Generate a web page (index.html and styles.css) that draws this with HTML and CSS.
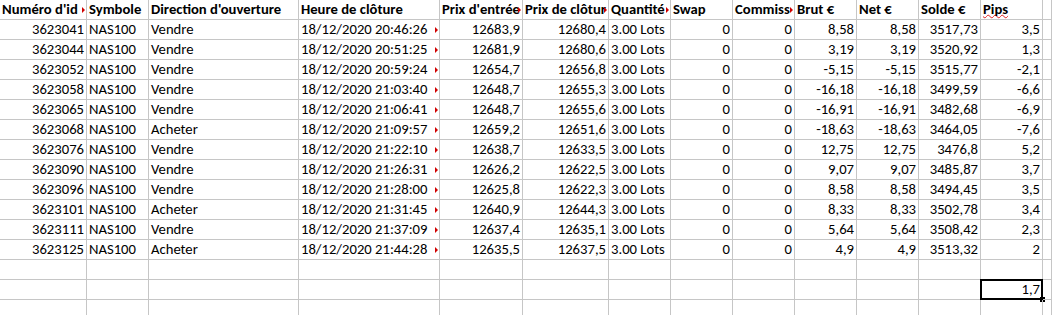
FILE: index.html
```html
<!DOCTYPE html>
<html lang="fr">
<head>
<meta charset="utf-8">
<title>Trades</title>
<link rel="stylesheet" href="styles.css">
</head>
<body>
<div class="sheet">
  <div class="c h clip">Numéro d'id</div>
  <div class="c h">Symbole</div>
  <div class="c h">Direction d'ouverture</div>
  <div class="c h">Heure de clôture</div>
  <div class="c h clip">Prix d'entrée</div>
  <div class="c h clip">Prix de clôtur</div>
  <div class="c h clip">Quantité</div>
  <div class="c h">Swap</div>
  <div class="c h clip">Commiss</div>
  <div class="c h">Brut €</div>
  <div class="c h">Net €</div>
  <div class="c h">Solde €</div>
  <div class="c h"><span class="spell">Pips</span></div>
  <div class="c"></div>

  <div class="c r">3623041</div><div class="c">NAS100</div><div class="c">Vendre</div><div class="c clip">18/12/2020 20:46:26</div><div class="c r">12683,9</div><div class="c r">12680,4</div><div class="c">3.00 Lots</div><div class="c r">0</div><div class="c r">0</div><div class="c r">8,58</div><div class="c r">8,58</div><div class="c r">3517,73</div><div class="c r">3,5</div><div class="c"></div>
  <div class="c r">3623044</div><div class="c">NAS100</div><div class="c">Vendre</div><div class="c clip">18/12/2020 20:51:25</div><div class="c r">12681,9</div><div class="c r">12680,6</div><div class="c">3.00 Lots</div><div class="c r">0</div><div class="c r">0</div><div class="c r">3,19</div><div class="c r">3,19</div><div class="c r">3520,92</div><div class="c r">1,3</div><div class="c"></div>
  <div class="c r">3623052</div><div class="c">NAS100</div><div class="c">Vendre</div><div class="c clip">18/12/2020 20:59:24</div><div class="c r">12654,7</div><div class="c r">12656,8</div><div class="c">3.00 Lots</div><div class="c r">0</div><div class="c r">0</div><div class="c r">-5,15</div><div class="c r">-5,15</div><div class="c r">3515,77</div><div class="c r">-2,1</div><div class="c"></div>
  <div class="c r">3623058</div><div class="c">NAS100</div><div class="c">Vendre</div><div class="c clip">18/12/2020 21:03:40</div><div class="c r">12648,7</div><div class="c r">12655,3</div><div class="c">3.00 Lots</div><div class="c r">0</div><div class="c r">0</div><div class="c r">-16,18</div><div class="c r">-16,18</div><div class="c r">3499,59</div><div class="c r">-6,6</div><div class="c"></div>
  <div class="c r">3623065</div><div class="c">NAS100</div><div class="c">Vendre</div><div class="c clip">18/12/2020 21:06:41</div><div class="c r">12648,7</div><div class="c r">12655,6</div><div class="c">3.00 Lots</div><div class="c r">0</div><div class="c r">0</div><div class="c r">-16,91</div><div class="c r">-16,91</div><div class="c r">3482,68</div><div class="c r">-6,9</div><div class="c"></div>
  <div class="c r">3623068</div><div class="c">NAS100</div><div class="c">Acheter</div><div class="c clip">18/12/2020 21:09:57</div><div class="c r">12659,2</div><div class="c r">12651,6</div><div class="c">3.00 Lots</div><div class="c r">0</div><div class="c r">0</div><div class="c r">-18,63</div><div class="c r">-18,63</div><div class="c r">3464,05</div><div class="c r">-7,6</div><div class="c"></div>
  <div class="c r">3623076</div><div class="c">NAS100</div><div class="c">Vendre</div><div class="c clip">18/12/2020 21:22:10</div><div class="c r">12638,7</div><div class="c r">12633,5</div><div class="c">3.00 Lots</div><div class="c r">0</div><div class="c r">0</div><div class="c r">12,75</div><div class="c r">12,75</div><div class="c r">3476,8</div><div class="c r">5,2</div><div class="c"></div>
  <div class="c r">3623090</div><div class="c">NAS100</div><div class="c">Vendre</div><div class="c clip">18/12/2020 21:26:31</div><div class="c r">12626,2</div><div class="c r">12622,5</div><div class="c">3.00 Lots</div><div class="c r">0</div><div class="c r">0</div><div class="c r">9,07</div><div class="c r">9,07</div><div class="c r">3485,87</div><div class="c r">3,7</div><div class="c"></div>
  <div class="c r">3623096</div><div class="c">NAS100</div><div class="c">Vendre</div><div class="c clip">18/12/2020 21:28:00</div><div class="c r">12625,8</div><div class="c r">12622,3</div><div class="c">3.00 Lots</div><div class="c r">0</div><div class="c r">0</div><div class="c r">8,58</div><div class="c r">8,58</div><div class="c r">3494,45</div><div class="c r">3,5</div><div class="c"></div>
  <div class="c r">3623101</div><div class="c">NAS100</div><div class="c">Acheter</div><div class="c clip">18/12/2020 21:31:45</div><div class="c r">12640,9</div><div class="c r">12644,3</div><div class="c">3.00 Lots</div><div class="c r">0</div><div class="c r">0</div><div class="c r">8,33</div><div class="c r">8,33</div><div class="c r">3502,78</div><div class="c r">3,4</div><div class="c"></div>
  <div class="c r">3623111</div><div class="c">NAS100</div><div class="c">Vendre</div><div class="c clip">18/12/2020 21:37:09</div><div class="c r">12637,4</div><div class="c r">12635,1</div><div class="c">3.00 Lots</div><div class="c r">0</div><div class="c r">0</div><div class="c r">5,64</div><div class="c r">5,64</div><div class="c r">3508,42</div><div class="c r">2,3</div><div class="c"></div>
  <div class="c r">3623125</div><div class="c">NAS100</div><div class="c">Acheter</div><div class="c clip">18/12/2020 21:44:28</div><div class="c r">12635,5</div><div class="c r">12637,5</div><div class="c">3.00 Lots</div><div class="c r">0</div><div class="c r">0</div><div class="c r">4,9</div><div class="c r">4,9</div><div class="c r">3513,32</div><div class="c r">2</div><div class="c"></div>

  <div class="c"></div><div class="c"></div><div class="c"></div><div class="c"></div><div class="c"></div><div class="c"></div><div class="c"></div><div class="c"></div><div class="c"></div><div class="c"></div><div class="c"></div><div class="c"></div><div class="c"></div><div class="c"></div>
  <div class="c"></div><div class="c"></div><div class="c"></div><div class="c"></div><div class="c"></div><div class="c"></div><div class="c"></div><div class="c"></div><div class="c"></div><div class="c"></div><div class="c"></div><div class="c"></div><div class="c r sel">1,7</div><div class="c"></div>
  <div class="c"></div><div class="c"></div><div class="c"></div><div class="c"></div><div class="c"></div><div class="c"></div><div class="c"></div><div class="c"></div><div class="c"></div><div class="c"></div><div class="c"></div><div class="c"></div><div class="c"></div><div class="c"></div>
</div>
</body>
</html>
```
FILE: styles.css
```css
html, body {
  margin: 0;
  padding: 0;
  background: #ffffff;
  overflow: hidden;
}

.sheet {
  display: grid;
  grid-template-columns: 87px 62px 150px 141px 83px 86px 62px 62px 62px 62px 62px 62px 62px 1fr;
  grid-auto-rows: 20px;
  font-family: "Carlito", "Calibri", "Lato", sans-serif;
  font-size: 14.67px;
  color: #000000;
}

.c {
  box-sizing: border-box;
  border-right: 1px solid #c6c6c6;
  border-bottom: 1px solid #c6c6c6;
  padding: 0 2px 0 2px;
  line-height: 19px;
  white-space: nowrap;
  overflow: hidden;
  position: relative;
}

.h {
  font-weight: bold;
}

.r {
  text-align: right;
}

.clip {
  text-overflow: clip;
  padding-right: 1px;
}

.clip::after {
  content: "";
  position: absolute;
  right: 1px;
  top: 7px;
  width: 0;
  height: 0;
  border-top: 3px solid transparent;
  border-bottom: 3px solid transparent;
  border-left: 3px solid #d00000;
}

.spell {
  text-decoration-line: underline;
  text-decoration-style: wavy;
  text-decoration-color: #e02020;
  text-decoration-skip-ink: none;
  text-underline-offset: 0px;
  text-decoration-thickness: 1px;
}

.sel {
  overflow: visible;
}

.sel::before {
  content: "";
  position: absolute;
  left: -1px;
  top: -1px;
  right: -1px;
  bottom: -1px;
  border: 2px solid #000000;
}

.sel::after {
  content: "";
  position: absolute;
  right: -3px;
  bottom: -3px;
  width: 5px;
  height: 5px;
  background: #000000;
}
```
